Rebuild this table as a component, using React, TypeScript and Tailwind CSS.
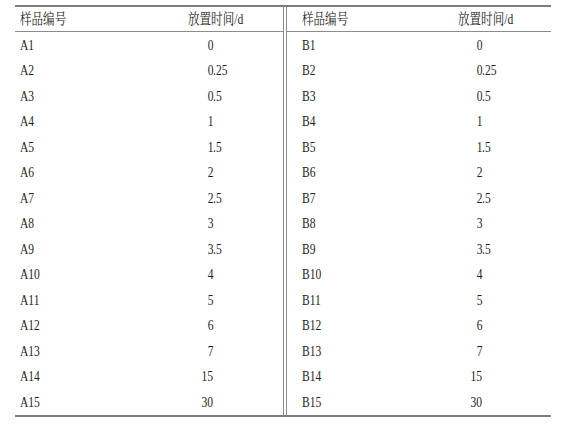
import React from "react";

const LEFT = [
  ["A1", "0"], ["A2", "0.25"], ["A3", "0.5"], ["A4", "1"], ["A5", "1.5"],
  ["A6", "2"], ["A7", "2.5"], ["A8", "3"], ["A9", "3.5"], ["A10", "4"],
  ["A11", "5"], ["A12", "6"], ["A13", "7"], ["A14", "15"], ["A15", "30"],
];
const RIGHT = LEFT.map(([k, v]) => [k.replace("A", "B"), v]);

const FONT = { fontFamily: '"Liberation Serif", "Noto Serif CJK SC", "Noto Sans CJK SC", serif' };

function T({ children, right }: { children: React.ReactNode; right?: boolean }) {
  return (
    <span
      className={
        right
          ? "inline-block whitespace-nowrap origin-right scale-x-[0.77]"
          : "inline-block whitespace-nowrap origin-left scale-x-[0.77]"
      }
    >
      {children}
    </span>
  );
}

function Table({ rows, pad, col1, intW }: { rows: string[][]; pad: string; col1: string; intW: string }) {
  return (
    <div className="flex-1 flex flex-col">
      <div className={`h-[25px] border-b border-[#8c8c8c] flex items-center ${pad}`}>
        <div className={`${col1} shrink-0`}>
          <T>样品编号</T>
        </div>
        <div>
          <T>放置时间/d</T>
        </div>
      </div>
      {rows.map(([k, v]) => {
        const dot = v.indexOf(".");
        const ip = dot >= 0 ? v.slice(0, dot) : v;
        const fp = dot >= 0 ? v.slice(dot) : "";
        return (
          <div key={k} className={`h-[25.5px] flex items-center ${pad}`}>
            <div className={`${col1} shrink-0`}>
              <T>{k}</T>
            </div>
            <div className="flex">
              <div className={`${intW} flex justify-end`}>
                <T right>{ip}</T>
              </div>
              <div>
                <T>{fp}</T>
              </div>
            </div>
          </div>
        );
      })}
    </div>
  );
}

export default function App() {
  return (
    <div className="w-[573px] h-[426px] bg-white pt-[5px] pl-[15px] text-[15px] text-[#1f1f22]" style={FONT}>
      <div className="w-[536px] border-t-2 border-b-2 border-[#7d7d7d] flex">
        <div className="w-[268px] flex">
          <Table rows={LEFT} pad="pl-[5px]" col1="w-[168px]" intW="w-[25px]" />
        </div>
        <div className="w-[4px] border-x border-[#8c8c8c]" />
        <div className="flex-1 flex">
          <Table rows={RIGHT} pad="pl-[15px]" col1="w-[156px]" intW="w-[24px]" />
        </div>
      </div>
    </div>
  );
}
